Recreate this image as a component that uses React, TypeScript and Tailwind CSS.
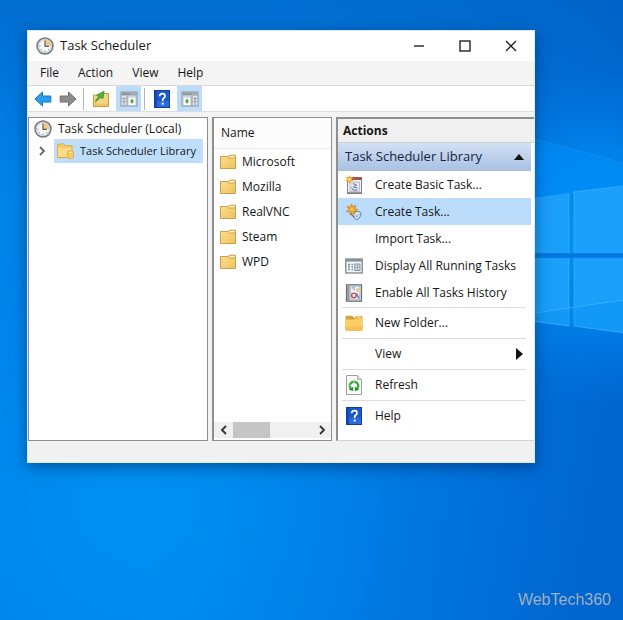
import type { ReactNode } from 'react';

const folders = ['Microsoft', 'Mozilla', 'RealVNC', 'Steam', 'WPD'];
const menus = ['File', 'Action', 'View', 'Help'];

function ClockIcon() {
  return (
    <svg className="h-[18px] w-[18px] shrink-0" viewBox="0 0 18 18" aria-hidden="true">
      <circle cx="9" cy="9" r="8" fill="#d9dde0" stroke="#74787c" strokeWidth="1.5" />
      <circle cx="9" cy="9" r="6.3" fill="#f7f8f9" stroke="#b4b9be" strokeWidth="0.6" />
      <path d="M9 9V2.8A6.2 6.2 0 0 1 15.2 9Z" fill="#f3c785" />
      <path d="M9 3.6V9.4H13" fill="none" stroke="#5b5f63" strokeWidth="1.2" />
      <path d="M3.4 9H4.6M9 14.6V13.4M5 13l.9-.9M13 13l-.9-.9" stroke="#8b9196" strokeWidth="0.9" />
    </svg>
  );
}

function FolderIcon() {
  return (
    <svg className="h-4 w-[18px] shrink-0" viewBox="0 0 18 16" aria-hidden="true">
      <defs>
        <linearGradient id="folder" x1="0" y1="0" x2="1" y2="1">
          <stop offset="0" stopColor="#fbdf92" />
          <stop offset="1" stopColor="#efc25c" />
        </linearGradient>
      </defs>
      <path d="M1.5 2.5H9L10.5 1.2H16.5V14.5H1.5Z" fill="url(#folder)" stroke="#c9a04a" />
      <path d="M11 2.6H15.5" stroke="#fff6d6" strokeWidth="1.2" />
      <path d="M9 4.2H14L16 3.6" fill="none" stroke="#cda654" strokeWidth="0.8" />
    </svg>
  );
}

function LibraryIcon() {
  return (
    <svg className="h-[18px] w-5 shrink-0" viewBox="0 0 20 18" aria-hidden="true">
      <path d="M1.5 2.5L7.5 1.5L9 3.5H16V15H1.5Z" fill="#f4c964" stroke="#d3a443" strokeWidth="0.8" />
      <path d="M2 6H15.5V15.5H2Z" fill="#fbdc83" />
      <path d="M2 15.6H11" stroke="#d3a443" />
      <rect x="11.5" y="8.5" width="6" height="8" rx="2" fill="#f6cc66" stroke="#dba846" strokeWidth="0.9" />
      <path d="M13 10.5H16" stroke="#fbe6a9" />
    </svg>
  );
}

function NewFolderIcon() {
  return (
    <svg className="h-[18px] w-[18px]" viewBox="0 0 18 18" aria-hidden="true">
      <path d="M0.5 3Q0.5 1.8 1.7 1.8H7.3L8.8 3.6H10L11 2H16.3Q17.5 2 17.5 3.2V15.5H0.5Z" fill="#db9f38" />
      <path d="M11.5 3.2H16" stroke="#fff0bd" strokeWidth="1.2" />
      <path d="M0.5 5.5H8.5L10 4.5H17.5V15.8Q17.5 17 16.3 17H1.7Q0.5 17 0.5 15.8Z" fill="#fbcf66" />
      <path d="M0.5 12.5H17.5V15.8Q17.5 17 16.3 17H1.7Q0.5 17 0.5 15.8Z" fill="#f6c055" />
    </svg>
  );
}

function HelpIcon() {
  return (
    <svg className="h-[18px] w-4" viewBox="0 0 16 18" aria-hidden="true">
      <rect x="0.5" y="0.5" width="15" height="17" fill="#2059cf" stroke="#123f9f" />
      <path d="M1 1H3V17H1Z" fill="#154aae" />
      <path d="M3 11H15V17H3Z" fill="#2b6be0" />
      <path d="M5.8 6.3V5.2Q6.2 3.7 8.4 3.7Q11 3.7 11 5.9Q11 7.3 9.6 8.3Q8.6 9 8.6 11" fill="none" stroke="#fff" strokeWidth="1.7" />
      <rect x="7.7" y="12.6" width="1.9" height="2" fill="#fff" />
    </svg>
  );
}

function ArrowIcon({ fill, stroke, flip }: { fill: string; stroke: string; flip?: boolean }) {
  return (
    <svg className={flip ? 'h-4 w-[18px] -scale-x-100' : 'h-4 w-[18px]'} viewBox="0 0 18 16" aria-hidden="true">
      <path d="M1 8L8.5 1V5H16.8V11H8.5V15Z" fill={fill} stroke={stroke} strokeWidth="1" strokeLinejoin="round" />
    </svg>
  );
}

function FolderUpIcon() {
  return (
    <svg className="h-[18px] w-[18px]" viewBox="0 0 18 18" aria-hidden="true">
      <path d="M1.5 5H8L9 3.5H16.5V16.5H1.5Z" fill="#f7d384" stroke="#c79a42" />
      <path d="M2 13.5H16V16H2Z" fill="#eec268" />
      <path d="M3.5 12Q3.8 8.6 6.6 7L4.8 5L12 1.2L11 8.6L9 7.4Q6.3 9 3.5 12Z" fill="#54b535" stroke="#2e8a1c" strokeWidth="0.7" />
    </svg>
  );
}

function PaneIcon({ right }: { right?: boolean }) {
  return (
    <svg className="h-4 w-[18px]" viewBox="0 0 18 16" aria-hidden="true">
      <rect x="1" y="1" width="16" height="14" fill="#e3e8ec" stroke="#8a939b" />
      <rect x="1.5" y="1.5" width="15" height="3" fill="#8f989f" />
      <path d="M11.5 3H15.5" stroke="#dfe5ea" strokeDasharray="1 0.8" />
      {right ? (
        <>
          <rect x="2" y="6" width="8" height="8.5" fill="#fff" stroke="#a6afb6" strokeWidth="0.7" />
          <path d="M11 5V15M14 6V14" stroke="#87919a" />
          <path d="M12 7.5H16M12 10.5H16" stroke="#a3adb6" />
          <ellipse cx="6" cy="10.3" rx="1.5" ry="2.2" fill="#5aa548" />
        </>
      ) : (
        <>
          <path d="M4 6V14M7 5V15" stroke="#87919a" />
          <path d="M2 7.5H6M2 10.5H6" stroke="#a3adb6" />
          <rect x="8" y="6" width="8" height="8.5" fill="#fff" stroke="#a6afb6" strokeWidth="0.7" />
          <ellipse cx="12" cy="10.3" rx="1.5" ry="2.2" fill="#5aa548" />
        </>
      )}
    </svg>
  );
}

function BasicTaskIcon() {
  return (
    <svg className="h-5 w-[18px]" viewBox="0 0 18 20" aria-hidden="true">
      <rect x="2.5" y="2.5" width="14" height="16" fill="#f3f3f5" stroke="#85827f" />
      <rect x="3" y="2" width="14" height="3" fill="#a8564b" />
      <path d="M3 17.8H16.5" stroke="#6f7074" />
      <rect x="5" y="7" width="9.5" height="9.5" fill="#e2e6f0" stroke="#a5adbe" strokeWidth="0.7" />
      <path d="M6.5 12.5L8 15H12.5M8 8.5L11.5 10L8.5 12L12.5 13" fill="none" stroke="#68769a" strokeWidth="1" />
      <path d="M4.2 0L5.2 2.5L8 1.7L6.8 4.2L8.6 6L5.8 6.3L4.5 9L3.3 6.3L0.3 6L2.2 4.2L0.8 1.7L3.4 2.4Z" fill="#f6a32b" />
      <circle cx="4.4" cy="4.3" r="1.5" fill="#ffdb76" />
    </svg>
  );
}

function CreateTaskIcon() {
  return (
    <svg className="h-[18px] w-[18px]" viewBox="0 0 18 18" aria-hidden="true">
      <path d="M7.5 12.5L10.5 8.5Q16.5 7.5 16 12Q15 15 11.5 17Z" fill="#d3e6f8" stroke="#5b81a5" strokeWidth="1" />
      <path d="M10 12L11.8 13.8L14.5 11" fill="none" stroke="#6f9ac2" />
      <path d="M6.5 0.8L7.8 3.6L11 2.4L10 5.4L13 6.8L9.8 7.8L10 11L7.2 9.2L5 12L4.7 8.8L1.2 8.6L3.8 6.4L2 3.2L5.2 4.1Z" fill="#f3a12c" stroke="#bd7717" strokeWidth="0.5" />
      <circle cx="6.8" cy="6.2" r="1.6" fill="#ffc94f" />
      <path d="M5.5 10.5L9.5 14.5" stroke="#96703a" strokeWidth="1.3" />
    </svg>
  );
}

function RunningTasksIcon() {
  return (
    <svg className="h-4 w-[18px]" viewBox="0 0 18 16" aria-hidden="true">
      <rect x="0.8" y="1" width="16.4" height="14" fill="#f5f7f8" stroke="#747c84" strokeWidth="1.2" />
      <rect x="1" y="1" width="16" height="2.6" fill="#87919a" />
      <path d="M3 6.5H5M3 9H5M3 11.5H5M6.5 6.5H8M6.5 9H8M6.5 11.5H8" stroke="#7b8996" strokeWidth="1.3" />
      <rect x="9.8" y="6" width="5.2" height="6.5" fill="#dce5ed" stroke="#788998" strokeWidth="0.9" />
      <path d="M12.4 6V12.5M10 9.2H15" stroke="#8a99a7" strokeWidth="0.8" />
    </svg>
  );
}

function HistoryIcon() {
  return (
    <svg className="h-[18px] w-[18px]" viewBox="0 0 18 18" aria-hidden="true">
      <rect x="1.5" y="0.8" width="15" height="16.4" fill="#d8dde2" stroke="#666e76" strokeWidth="1.2" />
      <path d="M2.2 1.5H4.5V16.5H2.2Z" fill="#8e979f" />
      <rect x="5.8" y="2.3" width="9" height="13.4" fill="#f6f9fc" stroke="#a3b0bd" strokeWidth="0.7" />
      <path d="M7 4L9 3.5V6.5" fill="none" stroke="#86a6d8" strokeWidth="1.2" />
      <path d="M10.5 5.5L14 3.5L13 9Z" fill="#edc34f" />
      <path d="M11.5 9.5L14 14.5" stroke="#6d90c4" strokeWidth="1.8" />
      <circle cx="8.9" cy="11.4" r="2.3" fill="#e8ecfa" stroke="#c44a5c" strokeWidth="1.4" />
    </svg>
  );
}

function RefreshIcon() {
  return (
    <svg className="h-5 w-4" viewBox="0 0 16 20" aria-hidden="true">
      <path d="M0.5 0.5H11.5L15.5 4.5V19.5H0.5Z" fill="#fafcf9" stroke="#9aa39a" />
      <path d="M11.5 0.5V4.5H15.5" fill="#dfe4df" stroke="#9aa39a" strokeWidth="0.8" />
      <path d="M5.3 14.2Q2.6 11 4.6 8.4Q8 5 11.4 8.4Q13.4 11 10.7 14.2" fill="none" stroke="#36a93a" strokeWidth="2.3" />
      <path d="M2.8 14.8L7.2 11.8V16Z" fill="#238f2b" />
      <path d="M13.2 14.8L8.8 11.8V16Z" fill="#238f2b" />
      <path d="M7.4 5.4L8.6 8.4M3 10.6L5.6 10.2" stroke="#d6f0d3" strokeWidth="0.7" />
    </svg>
  );
}

function Chevron({ left }: { left?: boolean }) {
  return (
    <svg className="h-2.5 w-2" viewBox="0 0 8 10" aria-hidden="true">
      <path d={left ? 'M6 1L2 5L6 9' : 'M2 1L6 5L2 9'} fill="none" stroke="currentColor" strokeWidth="1.8" />
    </svg>
  );
}

function ToolButton({ label, active, children }: { label: string; active?: boolean; children: ReactNode }) {
  return (
    <button
      aria-label={label}
      className={`flex h-[25px] w-[25px] items-center justify-center ${active ? 'bg-[#bbdcfa]' : 'hover:bg-[#e5f1fb]'}`}
    >
      {children}
    </button>
  );
}

const basicActions = [
  { label: 'Create Basic Task...', icon: <BasicTaskIcon /> },
  { label: 'Create Task...', icon: <CreateTaskIcon />, selected: true },
  { label: 'Import Task...', icon: null },
  { label: 'Display All Running Tasks', icon: <RunningTasksIcon /> },
  { label: 'Enable All Tasks History', icon: <HistoryIcon /> },
];

const otherActions = [
  { label: 'New Folder...', icon: <NewFolderIcon /> },
  { label: 'View', icon: null, submenu: true },
  { label: 'Refresh', icon: <RefreshIcon /> },
  { label: 'Help', icon: <HelpIcon /> },
];

// Desktop wallpaper with the lit window on the right
function Wallpaper() {
  return (
    <svg className="absolute inset-0 h-full w-full" viewBox="0 0 623 620" preserveAspectRatio="xMaxYMin slice" aria-hidden="true">
      <defs>
        <linearGradient id="base" x1="0" y1="0.3" x2="1" y2="0.45">
          <stop offset="0" stopColor="#0083e8" />
          <stop offset="0.4" stopColor="#0086ec" />
          <stop offset="0.75" stopColor="#0076de" />
          <stop offset="1" stopColor="#0066cf" />
        </linearGradient>
        <linearGradient id="top" x1="0" y1="0" x2="0" y2="1">
          <stop offset="0" stopColor="#0060c2" stopOpacity="0.65" />
          <stop offset="1" stopColor="#0068cf" stopOpacity="0" />
        </linearGradient>
        <radialGradient id="glow" cx="600" cy="235" r="175" gradientUnits="userSpaceOnUse">
          <stop offset="0" stopColor="#0094fa" />
          <stop offset="0.5" stopColor="#0088f0" stopOpacity="0.75" />
          <stop offset="1" stopColor="#0078e0" stopOpacity="0" />
        </radialGradient>
        <radialGradient id="floor" cx="130" cy="500" r="280" gradientUnits="userSpaceOnUse">
          <stop offset="0" stopColor="#0096f6" stopOpacity="0.7" />
          <stop offset="1" stopColor="#008cf0" stopOpacity="0" />
        </radialGradient>
      </defs>
      <rect width="623" height="620" fill="url(#base)" />
      <rect width="623" height="210" fill="url(#top)" />
      <rect width="623" height="620" fill="url(#floor)" />
      <rect x="400" y="40" width="223" height="390" fill="url(#glow)" />
      <path d="M535 139L623 163V187L535 200Z" fill="#0090fc" opacity="0.5" />
      <path d="M535 139L623 163" stroke="#29a0fa" opacity="0.35" />
      <g fill="#1a9ffa">
        <path d="M500 202L569 193V253H500Z" />
        <path d="M574 192L640 184V253H574Z" />
        <path d="M500 258H569V326L500 317Z" />
        <path d="M574 258H640V335L574 326Z" />
      </g>
      <path d="M500 255.5H640" stroke="#0077dc" strokeWidth="4" />
      <path d="M569 193V253M569 258V326L500 317M574 253V192L640 184M574 258V326L640 335" fill="none" stroke="#40b8ff" strokeWidth="0.7" />
      <path d="M535 313L623 300V332L535 321Z" fill="#0590f2" opacity="0.35" />
      <path d="M535 313L623 300" stroke="#3bb4ff" opacity="0.8" />
    </svg>
  );
}

export default function App() {
  return (
    <div className="relative min-h-screen overflow-hidden bg-[#0080e6] pt-[30px] pr-[88px] pb-6 pl-[27px] font-['Open_Sans','Noto_Sans',sans-serif] text-xs text-[#161616]">
      <Wallpaper />

      <main className="relative border border-[#dceaf5] bg-[#f3f3f3] shadow-[0_4px_14px_rgba(0,30,80,0.5)]">
        <header className="flex h-[30px] items-center bg-white pl-2">
          <ClockIcon />
          <h1 className="ml-1.5 text-[13px]">Task Scheduler</h1>
          <div className="ml-auto flex h-full">
            <button aria-label="Minimize" className="flex w-[46px] items-center justify-center">
              <svg className="h-3 w-3" viewBox="0 0 12 12"><path d="M1 6H11" stroke="#222" strokeWidth="1.4" /></svg>
            </button>
            <button aria-label="Maximize" className="flex w-[46px] items-center justify-center">
              <svg className="h-3 w-3" viewBox="0 0 12 12"><rect x="1" y="1" width="10" height="10" fill="none" stroke="#222" strokeWidth="1.4" /></svg>
            </button>
            <button aria-label="Close" className="flex w-[46px] items-center justify-center">
              <svg className="h-3 w-3" viewBox="0 0 12 12"><path d="M1 1L11 11M11 1L1 11" stroke="#222" strokeWidth="1.3" /></svg>
            </button>
          </div>
        </header>

        <nav className="flex h-6 items-center gap-[19px] bg-[#f4f4f4] pl-3">
          {menus.map((menu) => (
            <button key={menu}>{menu}</button>
          ))}
        </nav>

        <div className="flex h-[26px] items-center border-t border-[#dadada] bg-white pl-0.5">
          <ToolButton label="Back"><ArrowIcon fill="#2a9df0" stroke="#1377c4" /></ToolButton>
          <ToolButton label="Forward"><ArrowIcon fill="#8c8c8c" stroke="#6f6f6f" flip /></ToolButton>
          <span className="mr-1 ml-[3px] h-[22px] w-px bg-[#b5b5b5]" />
          <div className="flex gap-[3px]">
            <ToolButton label="Up one level"><FolderUpIcon /></ToolButton>
            <ToolButton label="Show console tree" active><PaneIcon /></ToolButton>
          </div>
          <span className="mr-1 ml-[3px] h-[22px] w-px bg-[#b5b5b5]" />
          <div className="flex gap-[3px]">
            <ToolButton label="Help"><HelpIcon /></ToolButton>
            <ToolButton label="Show action pane" active><PaneIcon right /></ToolButton>
          </div>
        </div>

        <div className="grid min-h-[330px] grid-cols-[180fr_120fr_198fr] gap-1 border-t border-[#dedede] pt-[5px]">
          <section className="min-w-0 border border-[#8e8e8e] bg-white pl-[5px]">
            <div className="flex h-[21px] items-center gap-1.5 whitespace-nowrap">
              <ClockIcon />
              Task Scheduler (Local)
            </div>
            <div className="flex h-6 items-center">
              <button aria-label="Expand" className="flex w-5 justify-center pr-1 text-[#666]">
                <Chevron />
              </button>
              <button className="mr-1 flex h-6 min-w-0 flex-1 items-center gap-1 bg-[#bfdefb] pl-0.5 text-[11px] whitespace-nowrap">
                <LibraryIcon />
                Task Scheduler Library
              </button>
            </div>
          </section>

          <section className="flex min-w-0 flex-col border border-l-2 border-[#8e8e8e] bg-white">
            <h2 className="flex h-[31px] items-center border-b border-[#ececec] bg-[#fcfcfc] pl-[7px]">Name</h2>
            <ul className="flex-1">
              {folders.map((folder) => (
                <li key={folder} className="flex h-[25px] items-center gap-[5px] pl-[5px]">
                  <FolderIcon />
                  {folder}
                </li>
              ))}
            </ul>
            <div className="mb-0.5 flex h-4 items-center bg-[#f0f0f0] text-[#333]">
              <button aria-label="Scroll left" className="flex w-[19px] justify-center"><Chevron left /></button>
              <div className="h-full flex-1"><div className="h-full w-[47%] bg-[#c5c5c5]" /></div>
              <button aria-label="Scroll right" className="flex w-[19px] justify-center"><Chevron /></button>
            </div>
          </section>

          <section className="min-w-0 border-t-2 border-b border-l-2 border-t-[#8e8e8e] border-b-[#d4d4d4] border-l-[#8e8e8e] bg-white">
            <h2 className="flex h-6 items-center border-b border-[#cfcfcf] bg-[#f0f0f0] pl-[5px] font-bold">Actions</h2>
            <div className="pr-[3px]">
              <button className="flex h-7 w-full items-center justify-between bg-gradient-to-b from-[#d3e1f4] to-[#a8c0e2] px-[7px] text-[13px] text-[#14243d]">
                Task Scheduler Library
                <svg className="h-1.5 w-2.5" viewBox="0 0 10 6"><path d="M0 6L5 0L10 6Z" fill="#111" /></svg>
              </button>
              {basicActions.map((action) => (
                <button
                  key={action.label}
                  className={`flex h-[27px] w-full items-center gap-3 pl-[7px] text-left whitespace-nowrap ${action.selected ? 'bg-[#bbdcfb]' : ''}`}
                >
                  <span className="flex w-[18px] justify-center">{action.icon}</span>
                  {action.label}
                </button>
              ))}
            </div>
            <div className="mt-px pr-2 pl-1">
              {otherActions.map((action) => (
                <button key={action.label} className="flex h-[31px] w-full items-center gap-3 border-t border-[#dedede] pl-[3px] text-left">
                  <span className="flex w-[18px] justify-center">{action.icon}</span>
                  {action.label}
                  {action.submenu && (
                    <svg className="mr-[3px] ml-auto h-3 w-[7px]" viewBox="0 0 7 12"><path d="M0 0L7 6L0 12Z" fill="#111" /></svg>
                  )}
                </button>
              ))}
            </div>
          </section>
        </div>

        <footer className="h-[21px] bg-[#f1f1f1]" />
      </main>

      <p className="absolute right-3 bottom-2 font-['Liberation_Sans',sans-serif] text-base text-[#9fb0bf]">WebTech360</p>
    </div>
  );
}
